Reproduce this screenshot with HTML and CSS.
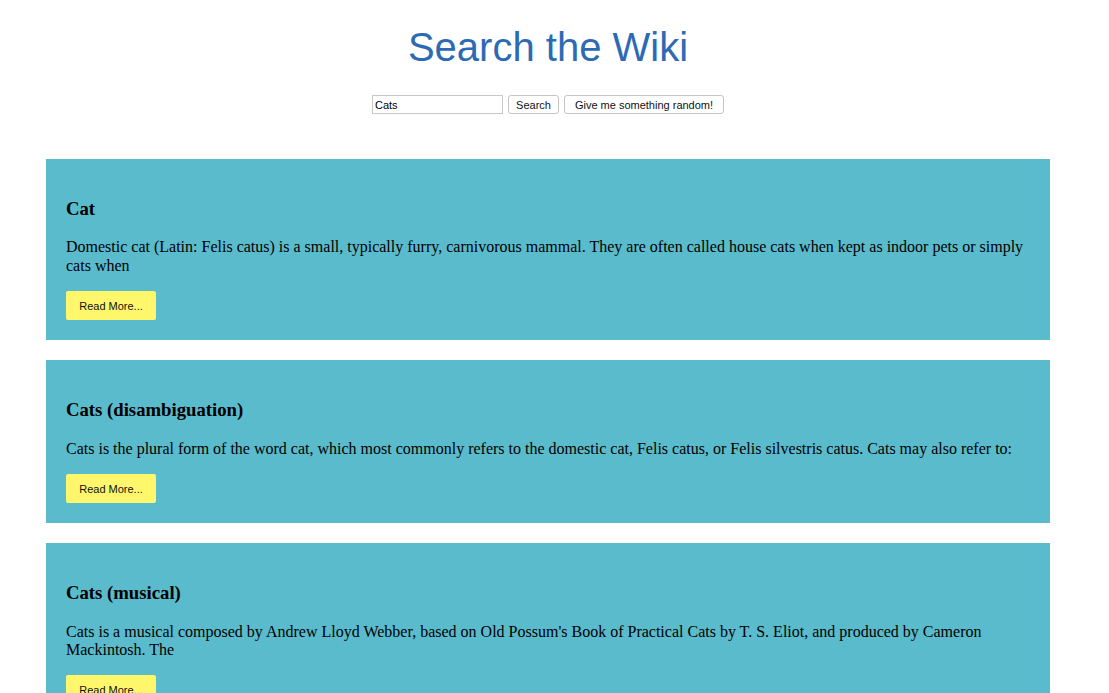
FILE: index.html
```html
<!DOCTYPE html>
<html>
<head>
<meta charset="utf-8">
<title>Search the Wiki</title>
<link rel="stylesheet" href="styles.css">
</head>
<body>
<div class="page">
  <h1 class="title">Search the Wiki</h1>
  <form class="search-form">
    <input class="search-input" type="text" value="Cats">
    <button class="btn btn-search" type="button">Search</button>
    <button class="btn btn-random" type="button">Give me something random!</button>
  </form>
  <div class="results">
    <div class="card">
      <h3 class="card-title">Cat</h3>
      <p class="card-text">Domestic cat (Latin: Felis catus) is a small, typically furry, carnivorous mammal. They are often called house cats when kept as indoor pets or simply cats when</p>
      <button class="read-more" type="button">Read More...</button>
    </div>
    <div class="card">
      <h3 class="card-title">Cats (disambiguation)</h3>
      <p class="card-text">Cats is the plural form of the word cat, which most commonly refers to the domestic cat, Felis catus, or Felis silvestris catus. Cats may also refer to:</p>
      <button class="read-more" type="button">Read More...</button>
    </div>
    <div class="card">
      <h3 class="card-title">Cats (musical)</h3>
      <p class="card-text">Cats is a musical composed by Andrew Lloyd Webber, based on Old Possum's Book of Practical Cats by T. S. Eliot, and produced by Cameron Mackintosh. The</p>
      <button class="read-more" type="button">Read More...</button>
    </div>
  </div>
</div>
</body>
</html>
```

FILE: styles.css
```css
html, body {
  margin: 0;
  padding: 0;
  background: #ffffff;
}
body {
  font-family: "Liberation Serif", "Times New Roman", serif;
  font-size: 16px;
  color: #000;
  overflow: hidden;
}
.page {
  width: 1096px;
  padding: 0 46px;
  box-sizing: border-box;
}
.title {
  font-family: "Liberation Sans", Arial, sans-serif;
  font-weight: normal;
  font-size: 40px;
  line-height: 46px;
  color: #2d6ab5;
  text-align: center;
  margin: 24px 0 25px;
}
.search-form {
  display: flex;
  justify-content: center;
  align-items: center;
  gap: 5px;
  margin: 0 0 45px;
  height: 19px;
}
.search-input {
  width: 131px;
  height: 19px;
  box-sizing: border-box;
  border: 1px solid #c8c8c8;
  padding: 0 2px;
  margin: 0;
  font-family: "Liberation Sans", Arial, sans-serif;
  font-size: 11px;
  color: #000;
  background: #fff;
}
.btn {
  height: 19px;
  box-sizing: border-box;
  border: 1px solid #c4c4c4;
  border-radius: 3px;
  background: #fff;
  padding: 0;
  margin: 0;
  font-family: "Liberation Sans", Arial, sans-serif;
  font-size: 11px;
  color: #111;
  text-align: center;
}
.btn-search {
  width: 51px;
}
.btn-random {
  width: 160px;
}
.results {
  display: flex;
  flex-direction: column;
  gap: 20px;
}
.card {
  background: #5abbcc;
  padding: 20px;
}
.card-title {
  font-size: 18.72px;
  font-weight: bold;
  margin: 18.72px 0;
}
.card-text {
  margin: 16px 0;
  line-height: 18.4px;
}
.read-more {
  display: block;
  width: 90px;
  height: 29px;
  border: none;
  border-radius: 2px;
  background: #fff76b;
  font-family: "Liberation Sans", Arial, sans-serif;
  font-size: 11px;
  color: #111;
  padding: 0;
  margin: 0;
}
```
